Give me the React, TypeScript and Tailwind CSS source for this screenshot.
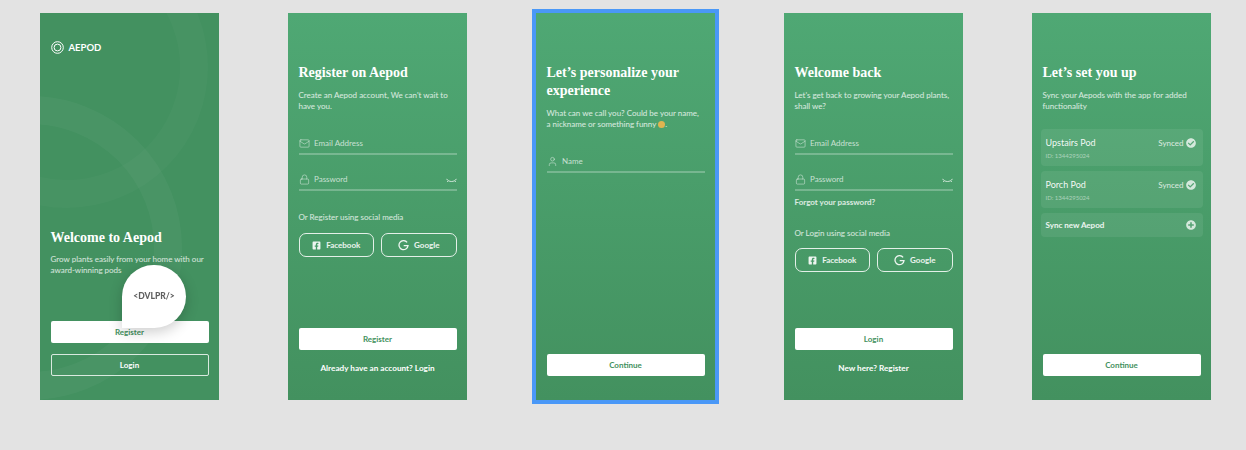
import type { ReactNode } from 'react';
import { Lock, Mail, User } from 'lucide-react';
import { FaCheckCircle, FaFacebookSquare, FaPlusCircle } from 'react-icons/fa';

const serif = "font-['Liberation_Serif',serif] font-bold text-white text-[14px] leading-[18px]";
const body = 'text-[8px] leading-[11px] text-white/80';

const Phone = ({ children, className = '' }: { children: ReactNode; className?: string }) => (
  <div
    className={`relative flex h-[387px] w-[179px] shrink-0 flex-col overflow-hidden bg-gradient-to-b from-[#4fa874] to-[#43915f] px-[10.5px] ${className}`}
  >
    {children}
  </div>
);

const Heading = ({ title, text }: { title: ReactNode; text: ReactNode }) => (
  <div className="pt-[51px]">
    <h2 className={serif}>{title}</h2>
    <p className={`mt-[8px] ${body}`}>{text}</p>
  </div>
);

const ClosedEye = () => (
  <svg width="11" height="6" viewBox="0 0 11 6" fill="none" stroke="currentColor" strokeWidth="1">
    <path d="M0.5 0.8C2.5 4.4 8.5 4.4 10.5 0.8M2.2 2.8L1.2 4M8.8 2.8L9.8 4" />
  </svg>
);

const GoogleG = () => (
  <svg width="11" height="11" viewBox="0 0 11 11" fill="none" stroke="currentColor" strokeWidth="1.3">
    <path d="M9.1 2.4A4.5 4.5 0 1 0 10 5.6H5.7" />
  </svg>
);

const Field = ({ icon, label, eye, className = '' }: { icon: ReactNode; label: string; eye?: boolean; className?: string }) => (
  <div className={`flex h-[21px] items-start border-b-2 border-white/25 pt-[4px] text-white/70 ${className}`}>
    <span className="-mt-[0.5px] flex w-[15.5px] shrink-0 items-center">{icon}</span>
    <span className="text-[8px] leading-[11px]">{label}</span>
    {eye && (
      <span className="ml-auto pt-[4px]">
        <ClosedEye />
      </span>
    )}
  </div>
);

const WhiteButton = ({ label, className = '' }: { label: string; className?: string }) => (
  <button className={`flex h-[22px] w-full shrink-0 items-center justify-center rounded-[2px] bg-white text-[8px] font-bold text-[#439160] ${className}`}>
    {label}
  </button>
);

const Social = ({ className = '' }: { className?: string }) => (
  <div className={`flex gap-[7px] ${className}`}>
    <button className="flex h-[24px] flex-1 items-center justify-center gap-[5px] rounded-[7px] border-[1.2px] border-white/85 text-[8px] font-bold text-white/90">
      <FaFacebookSquare className="h-[9px] w-[9px]" />
      Facebook
    </button>
    <button className="flex h-[24px] flex-1 items-center justify-center gap-[5px] rounded-[7px] border-[1.2px] border-white/85 text-[8px] font-bold text-white/90">
      <GoogleG />
      Google
    </button>
  </div>
);

const PodCard = ({ name }: { name: string }) => (
  <div className="flex h-[37px] items-start justify-between rounded-[4px] bg-white/[.07] pl-[5px] pr-[7px] pt-[8px]">
    <div>
      <div className="text-[9px] leading-[12px] text-white/95">{name}</div>
      <div className="mt-[3px] text-[6px] leading-[8px] text-white/50">ID: 1344295024</div>
    </div>
    <div className="flex items-center gap-[2px] text-[8px] font-medium leading-[12px] text-white/75">
      Synced
      <FaCheckCircle className="h-[10px] w-[10px]" />
    </div>
  </div>
);

const App = () => {
  return (
    <div className="flex h-[450px] w-[1246px] gap-[69px] overflow-hidden bg-[#e3e3e3] pl-[40px] pt-[13px] font-['Lato',sans-serif]">
      <Phone className="!bg-none bg-[#439160]">
        <svg className="absolute left-0 top-0 h-full w-full" viewBox="0 0 179 387" fill="none">
          <circle cx="27" cy="54" r="127" stroke="#fff" strokeOpacity="0.025" strokeWidth="28" />
          <circle cx="-10" cy="235" r="138" stroke="#fff" strokeOpacity="0.035" strokeWidth="28" />
        </svg>
        <div className="relative flex items-center gap-[5px] pt-[28px]">
          <svg width="13" height="13" viewBox="0 0 13 13" fill="none" stroke="#fff">
            <circle cx="6.5" cy="6.5" r="5.8" strokeWidth="1" />
            <circle cx="6.5" cy="6.5" r="3.4" strokeWidth="1" />
          </svg>
          <span className="text-[9.5px] font-bold leading-[12px] text-white">AEPOD</span>
        </div>
        <div className="relative mt-auto">
          <h2 className={serif}>Welcome to Aepod</h2>
          <p className={`mt-[7px] ${body}`}>Grow plants easily from your home with our award-winning pods</p>
        </div>
        <WhiteButton label="Register" className="relative mt-[45px]" />
        <button className="relative mb-[24px] mt-[11px] flex h-[22px] w-full shrink-0 items-center justify-center rounded-[2px] border border-white/80 text-[8px] font-bold text-white">
          Login
        </button>
        <div className="absolute left-[82px] top-[252px] flex h-[63px] w-[64px] items-center justify-center rounded-full rounded-bl-none bg-white shadow-[0_4px_14px_rgba(0,0,0,0.2)]">
          <span className="text-[8.5px] font-black text-[#5f5f5f] blur-[0.5px]">&lt;DVLPR/&gt;</span>
        </div>
      </Phone>

      <Phone>
        <Heading title="Register on Aepod" text="Create an Aepod account, We can't wait to have you." />
        <Field className="mt-[22px]" icon={<Mail className="h-[11px] w-[11px]" strokeWidth={1.3} />} label="Email Address" />
        <Field className="mt-[15px]" icon={<Lock className="h-[11px] w-[11px]" strokeWidth={1.3} />} label="Password" eye />
        <p className={`mt-[21px] ${body}`}>Or Register using social media</p>
        <Social className="mt-[10px]" />
        <WhiteButton label="Register" className="mt-auto" />
        <p className="mb-[26px] mt-[13px] text-center text-[8.2px] font-bold leading-[11px] text-white">Already have an account? Login</p>
      </Phone>

      <Phone className="outline-4 outline-[#4a98f7]">
        <Heading
          title={
            <>
              Let’s personalize your
              <br />
              experience
            </>
          }
          text={
            <>
              What can we call you? Could be your name, a nickname or something funny{' '}
              <span className="inline-block h-[7px] w-[7px] rounded-full bg-[#e0b450] align-[-1px]" />.
            </>
          }
        />
        <Field className="mt-[22px]" icon={<User className="h-[11px] w-[11px]" strokeWidth={1.3} />} label="Name" />
        <WhiteButton label="Continue" className="mb-[24px] mt-auto" />
      </Phone>

      <Phone>
        <Heading title="Welcome back" text="Let's get back to growing your Aepod plants, shall we?" />
        <Field className="mt-[22px]" icon={<Mail className="h-[11px] w-[11px]" strokeWidth={1.3} />} label="Email Address" />
        <Field className="mt-[15px]" icon={<Lock className="h-[11px] w-[11px]" strokeWidth={1.3} />} label="Password" eye />
        <p className="mt-[6px] text-[8px] font-bold leading-[11px] text-white/80">Forgot your password?</p>
        <p className={`mt-[20px] ${body}`}>Or Login using social media</p>
        <Social className="mt-[9px]" />
        <WhiteButton label="Login" className="mt-auto" />
        <p className="mb-[26px] mt-[13px] text-center text-[8.2px] font-bold leading-[11px] text-white">New here? Register</p>
      </Phone>

      <Phone>
        <Heading title="Let’s set you up" text="Sync your Aepods with the app for added functionality" />
        <div className="-mx-[2px] mt-[17px] flex flex-col gap-[5px]">
          <PodCard name="Upstairs Pod" />
          <PodCard name="Porch Pod" />
          <div className="flex h-[24px] items-center justify-between rounded-[4px] bg-white/[.07] pl-[5px] pr-[7px] text-[8px] font-bold text-white/90">
            Sync new Aepod
            <FaPlusCircle className="h-[10px] w-[10px] text-white/75" />
          </div>
        </div>
        <WhiteButton label="Continue" className="mb-[24px] mt-auto" />
      </Phone>
    </div>
  );
};

export default App;
